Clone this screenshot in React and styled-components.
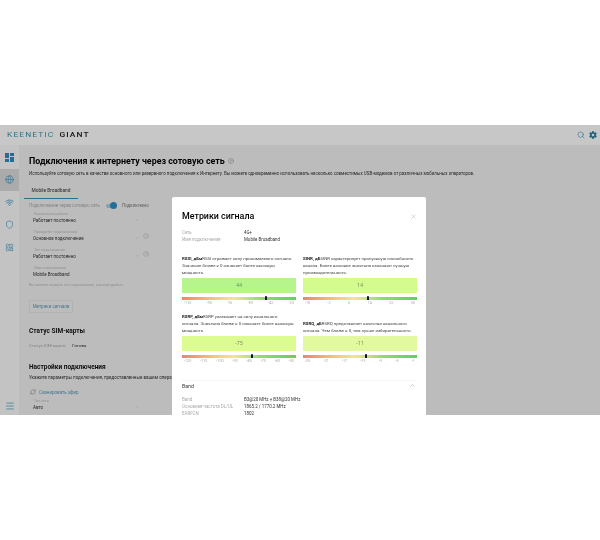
import React from "react";
import styled, { createGlobalStyle } from "styled-components";
import { Search, Globe, Wifi, Shield, Atom, Menu, X, ChevronUp, ChevronDown, RefreshCw, HelpCircle } from "lucide-react";
import { FaCog } from "react-icons/fa";

const GlobalStyle = createGlobalStyle`
  html, body { margin: 0; padding: 0; background: #fff; }
  body { font-family: Roboto, "Liberation Sans", sans-serif; color: #222; }
`;

const Page = styled.div`
  width: 600px;
  height: 540px;
  padding-top: 125px;
  box-sizing: border-box;
  background: #fff;
  overflow: hidden;
`;

const Frame = styled.div`
  position: relative;
  height: 290px;
  overflow: hidden;
  background: #f1f1f1;
  display: flex;
  flex-direction: column;
  filter: blur(0.4px);
`;

const Header = styled.header`
  flex: none;
  height: 20px;
  background: #fff;
  display: flex;
  align-items: center;
  justify-content: space-between;
  padding: 0 3px 0 7px;
`;

const Logo = styled.div`
  display: flex;
  gap: 4px;
  font-size: 6.6px;
  line-height: 8px;
  font-weight: 400;
  letter-spacing: 0.85px;
  transform: scaleX(1.28);
  transform-origin: left center;
  color: #3f93ad;
`;

const LogoDark = styled.span`
  color: #222;
  font-weight: 500;
`;

const Tools = styled.div`
  display: flex;
  align-items: center;
  gap: 4px;
  color: #2e7fa3;
`;

const Body = styled.div`
  flex: 1;
  display: flex;
  min-height: 0;
`;

const Sidebar = styled.nav`
  flex: none;
  width: 19px;
  background: #fafafa;
  display: flex;
  flex-direction: column;
  padding-top: 1px;
`;

const NavItem = styled.div`
  height: 22.5px;
  display: flex;
  align-items: center;
  justify-content: center;
  color: #2e8fb8;
  background: ${(p) => (p.$active ? "#dcdcdc" : "transparent")};
`;

const NavBottom = styled.div`
  margin-top: auto;
  height: 19px;
  display: flex;
  align-items: center;
  justify-content: center;
  color: #2e8fb8;
`;

const Main = styled.main`
  flex: 1;
  min-width: 0;
  padding: 10px 0 0 10px;
`;

const Title = styled.h1`
  margin: 0;
  font-size: 8.9px;
  line-height: 12px;
  font-weight: 700;
  color: #000;
  display: flex;
  align-items: center;
  gap: 3px;
  white-space: nowrap;
`;

const Lead = styled.p`
  margin: 3px 0 0;
  font-size: 4.46px;
  line-height: 7px;
  color: #333;
  white-space: nowrap;
`;

const Tabs = styled.div`
  margin: 9px 0 0 -5px;
  width: 54px;
  height: 12px;
  border-bottom: 1px solid #3a8fb8;
  font-size: 4.8px;
  line-height: 10px;
  text-align: center;
  color: #333;
`;

const Form = styled.div`
  width: 125px;
  margin-top: 2px;
`;

const SwitchRow = styled.div`
  display: flex;
  align-items: center;
  height: 9px;
  font-size: 4.45px;
  color: #aaa;
  white-space: nowrap;
`;

const Track = styled.span`
  position: relative;
  display: block;
  width: 10px;
  height: 4px;
  margin: 0 6px;
  border-radius: 2px;
  background: #a9cfe0;
`;

const Thumb = styled.span`
  position: absolute;
  right: -1px;
  top: -1.5px;
  width: 7px;
  height: 7px;
  border-radius: 50%;
  background: #2e8fc8;
`;

const SwitchState = styled.span`
  color: #777;
`;

const Field = styled.div`
  display: flex;
  align-items: center;
  gap: 3px;
  margin: ${(p) => p.$top}px 0 0 4px;
  height: 16.5px;
`;

const FieldBox = styled.div`
  flex: none;
  width: 107px;
  position: relative;
`;

const FieldLabel = styled.div`
  font-size: 3.7px;
  line-height: 5px;
  color: #bbb;
  padding-left: 1px;
`;

const FieldValue = styled.div`
  font-size: 4.5px;
  line-height: 8px;
  color: #333;
`;

const FieldCaret = styled.span`
  position: absolute;
  right: 1px;
  top: 6px;
  color: #bbb;
  display: flex;
`;

const Hint = styled.div`
  margin-top: 2px;
  font-size: 3.7px;
  line-height: 5px;
  color: #bbb;
  white-space: nowrap;
`;

const OutlineButton = styled.div`
  width: 44px;
  height: 13px;
  margin-top: 12px;
  border: 1px solid #e4e4e4;
  box-sizing: border-box;
  font-size: 4.5px;
  line-height: 11px;
  text-align: center;
  color: #5a9ab8;
`;

const SectionTitle = styled.h2`
  margin: ${(p) => p.$gap}px 0 0;
  font-size: 6.5px;
  line-height: 10px;
  font-weight: 700;
  color: #111;
  white-space: nowrap;
`;

const SimRow = styled.div`
  display: flex;
  gap: 6px;
  margin-top: 6px;
  font-size: 4.4px;
  line-height: 7px;
  color: #aaa;
`;

const SimValue = styled.span`
  color: #333;
`;

const SectionText = styled.div`
  margin-top: 2px;
  font-size: 4.5px;
  line-height: 7px;
  color: #333;
  white-space: nowrap;
`;

const ScanLink = styled.div`
  display: flex;
  align-items: center;
  gap: 3px;
  margin: 8px 0 0 1px;
  font-size: 4.5px;
  line-height: 7px;
  color: #5a9ab8;
`;

const Overlay = styled.div`
  position: absolute;
  inset: 0;
  background: rgba(0, 0, 0, 0.22);
  display: flex;
  justify-content: center;
  padding-top: 72px;
  padding-right: 2px;
  box-sizing: border-box;
`;

const Modal = styled.section`
  width: 254px;
  height: 300px;
  flex: none;
  box-sizing: border-box;
  padding: 13px 10px 0;
  background: #fff;
  border-radius: 2px;
`;

const ModalHead = styled.div`
  display: flex;
  align-items: center;
  justify-content: space-between;
  height: 12px;
`;

const ModalTitle = styled.h3`
  margin: 0;
  font-size: 8.9px;
  line-height: 12px;
  font-weight: 500;
  color: #000;
`;

const Close = styled.span`
  display: flex;
  color: #aaa;
  margin-right: -1px;
`;

const InfoList = styled.div`
  margin-top: ${(p) => p.$top}px;
`;

const InfoRow = styled.div`
  display: grid;
  grid-template-columns: 62px 1fr;
  font-size: 4.45px;
  line-height: 7px;
  color: #333;
  white-space: nowrap;
`;

const InfoKey = styled.span`
  color: #aaa;
`;

const MetricGrid = styled.div`
  margin-top: 12px;
  display: grid;
  grid-template-columns: 114px 114px;
  column-gap: 7px;
  row-gap: 7.5px;
`;

const Metric = styled.div`
  display: flex;
  flex-direction: column;
  justify-content: flex-end;
`;

const MetricText = styled.p`
  margin: 0;
  font-size: 4.35px;
  line-height: 7px;
  color: #444;
`;

const MetricName = styled.b`
  font-weight: 700;
  color: #222;
`;

const ValueBox = styled.div`
  margin-top: 2px;
  height: 14.5px;
  background: ${(p) => p.$bg};
  font-size: 5.5px;
  line-height: 14.5px;
  text-align: center;
  color: #6f9a5e;
`;

const Bar = styled.div`
  position: relative;
  margin-top: 4px;
  height: 3px;
  background: linear-gradient(90deg, #ee8468 0%, #f6c47c 28%, #f3e68c 45%, #8bdc6e 70%, #62cf62 100%);
`;

const Marker = styled.span`
  position: absolute;
  top: -1px;
  width: 2px;
  height: 4px;
  margin-left: -1px;
  background: #111;
  border-radius: 1px 1px 0 0;
`;

const Ticks = styled.div`
  display: flex;
  justify-content: space-between;
  padding: 0 2px;
  margin-top: 1px;
  font-size: 3.7px;
  line-height: 5px;
  color: #aaa;
`;

const Accordion = styled.div`
  margin-top: 16px;
  border-top: 1px solid #f6f6f6;
`;

const AccordionHead = styled.div`
  display: flex;
  align-items: center;
  justify-content: space-between;
  height: 8px;
  margin-top: 1px;
  font-size: 5.2px;
  color: #333;
`;

const Caret = styled.span`
  display: flex;
  color: #888;
`;

const metrics = [
  {
    name: "RSSI, дБм",
    text: "RSSI отражает силу принимаемого сигнала. Значение ближе к 0 означает более высокую мощность.",
    value: "44",
    bg: "#b6f58c",
    marker: 74,
    ticks: ["-110", "-93", "-76", "-59", "-42", "-25"],
  },
  {
    name: "SINR, дБ",
    text: "SINR характеризует пропускную способность канала. Более высокие значения означают лучшую производительность.",
    value: "14",
    bg: "#d4fb8e",
    marker: 57,
    ticks: ["-10", "-2", "6", "14", "22", "30"],
  },
  {
    name: "RSRP, дБм",
    text: "RSRP указывает на силу канального сигнала. Значения ближе к 0 означает более высокую мощность.",
    value: "-75",
    bg: "#dcfc92",
    marker: 61,
    ticks: ["-120", "-110", "-100", "-90", "-80", "-70", "-60", "-50"],
  },
  {
    name: "RSRQ, дБ",
    text: "RSRQ представляет качество канального сигнала. Чем ближе к 0, тем лучше избирательность.",
    value: "-11",
    bg: "#e2f9a0",
    marker: 55,
    ticks: ["-25", "-21", "-17", "-13", "-9", "-5", "-1"],
  },
];

const fields = [
  { label: "Расписание работы", value: "Работает постоянно" },
  { label: "Приоритет подключения", value: "Основное подключение", help: true },
  { label: "Тип подключения", value: "Работает постоянно", help: true },
  { label: "Имя подключения", value: "Mobile Broadband", plain: true },
];

function DashboardIcon() {
  return (
    <svg width="9" height="9" viewBox="0 0 9 9" fill="currentColor">
      <rect x="0" y="0" width="4" height="5" />
      <rect x="5" y="0" width="4" height="3" />
      <rect x="0" y="6" width="4" height="3" />
      <rect x="5" y="4" width="4" height="5" />
    </svg>
  );
}

function App() {
  return (
    <Page>
      <GlobalStyle />
      <Frame>
        <Header>
          <Logo>
            KEENETIC <LogoDark>GIANT</LogoDark>
          </Logo>
          <Tools>
            <Search size={8} strokeWidth={1.5} />
            <FaCog size={8} />
          </Tools>
        </Header>
        <Body>
          <Sidebar>
            <NavItem><DashboardIcon /></NavItem>
            <NavItem $active><Globe size={9} strokeWidth={1.5} /></NavItem>
            <NavItem><Wifi size={9} strokeWidth={2} /></NavItem>
            <NavItem><Shield size={9} strokeWidth={1.5} /></NavItem>
            <NavItem><Atom size={9} strokeWidth={1.5} /></NavItem>
            <NavBottom><Menu size={10} strokeWidth={1.5} /></NavBottom>
          </Sidebar>
          <Main>
            <Title>
              Подключения к интернету через сотовую сеть
              <HelpCircle size={6} color="#999" />
            </Title>
            <Lead>
              Используйте сотовую сеть в качестве основного или резервного подключения к Интернету. Вы можете одновременно использовать несколько совместимых USB-модемов от различных мобильных операторов.
            </Lead>
            <Tabs>Mobile Broadband</Tabs>
            <Form>
              <SwitchRow>
                Подключение через сотовую сеть
                <Track><Thumb /></Track>
                <SwitchState>Подключено</SwitchState>
              </SwitchRow>
              {fields.map((f, i) => (
                <Field key={f.label} $top={i === 0 ? 0 : 1.5}>
                  <FieldBox>
                    <FieldLabel>{f.label}</FieldLabel>
                    <FieldValue>{f.value}</FieldValue>
                    {!f.plain && (
                      <FieldCaret><ChevronDown size={4} /></FieldCaret>
                    )}
                  </FieldBox>
                  {f.help && <HelpCircle size={6} color="#aaa" strokeWidth={1.5} />}
                </Field>
              ))}
              <Hint>Вы можете назвать это подключение, как вам удобно.</Hint>
            </Form>
            <OutlineButton>Метрики сигнала</OutlineButton>
            <SectionTitle $gap={13}>Статус SIM-карты</SectionTitle>
            <SimRow>
              Статус SIM-карты: <SimValue>Готова</SimValue>
            </SimRow>
            <SectionTitle $gap={13}>Настройки подключения</SectionTitle>
            <SectionText>
              Укажите параметры подключения, предоставленные вашим оператором связи.
            </SectionText>
            <ScanLink>
              <RefreshCw size={6} color="#888" />
              Сканировать эфир
            </ScanLink>
            <Field $top={2}>
              <FieldBox>
                <FieldLabel>Тип сети</FieldLabel>
                <FieldValue>Авто</FieldValue>
                <FieldCaret><ChevronDown size={4} /></FieldCaret>
              </FieldBox>
            </Field>
          </Main>
        </Body>
        <Overlay>
          <Modal>
            <ModalHead>
              <ModalTitle>Метрики сигнала</ModalTitle>
              <Close><X size={7} strokeWidth={1.5} /></Close>
            </ModalHead>
            <InfoList $top={7}>
              <InfoRow><InfoKey>Сеть</InfoKey><span>4G+</span></InfoRow>
              <InfoRow><InfoKey>Имя подключения</InfoKey><span>Mobile Broadband</span></InfoRow>
            </InfoList>
            <MetricGrid>
              {metrics.map((m) => (
                <Metric key={m.name}>
                  <MetricText>
                    <MetricName>{m.name}</MetricName>
                    {m.text}
                  </MetricText>
                  <ValueBox $bg={m.bg}>{m.value}</ValueBox>
                  <Bar>
                    <Marker style={{ left: `${m.marker}%` }} />
                  </Bar>
                  <Ticks>
                    {m.ticks.map((t) => (
                      <span key={t}>{t}</span>
                    ))}
                  </Ticks>
                </Metric>
              ))}
            </MetricGrid>
            <Accordion>
              <AccordionHead>
                Band
                <Caret><ChevronUp size={7} strokeWidth={1.5} /></Caret>
              </AccordionHead>
              <InfoList $top={6.5}>
                <InfoRow><InfoKey>Band</InfoKey><span>B3@20 MHz + B38@20 MHz</span></InfoRow>
                <InfoRow><InfoKey>Основная частота DL/UL</InfoKey><span>1865.2 / 1770.2 MHz</span></InfoRow>
                <InfoRow><InfoKey>EARFCN</InfoKey><span>1802</span></InfoRow>
              </InfoList>
            </Accordion>
          </Modal>
        </Overlay>
      </Frame>
    </Page>
  );
}

export default App;
